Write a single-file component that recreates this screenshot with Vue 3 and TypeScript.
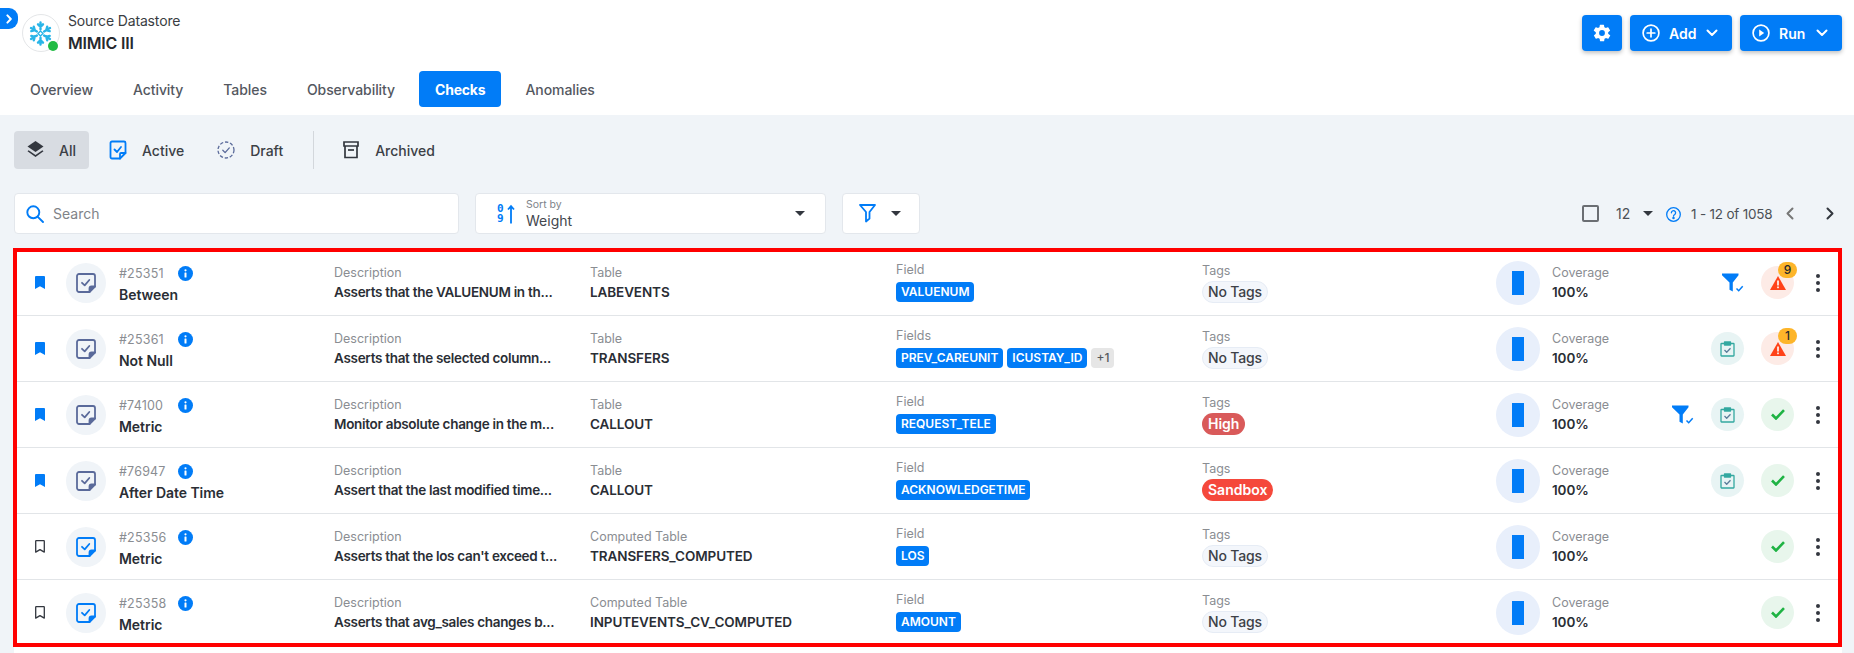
<script setup lang="ts">
interface Chip { label: string; gray?: boolean }
interface Row {
  id: string; name: string; desc: string; tableLabel: string; table: string;
  fieldLabel: string; chips: Chip[]; tag: string; tagKind: string;
  active: boolean; bookmarked: boolean; funnel: boolean; clip: boolean; warn: string;
}
const tabs = ['Overview', 'Activity', 'Tables', 'Observability', 'Checks', 'Anomalies']
const rows: Row[] = [
  { id: '#25351', name: 'Between', desc: 'Asserts that the VALUENUM in th...', tableLabel: 'Table', table: 'LABEVENTS', fieldLabel: 'Field', chips: [{ label: 'VALUENUM' }], tag: 'No Tags', tagKind: 'none', active: false, bookmarked: true, funnel: true, clip: false, warn: '9' },
  { id: '#25361', name: 'Not Null', desc: 'Asserts that the selected column...', tableLabel: 'Table', table: 'TRANSFERS', fieldLabel: 'Fields', chips: [{ label: 'PREV_CAREUNIT' }, { label: 'ICUSTAY_ID' }, { label: '+1', gray: true }], tag: 'No Tags', tagKind: 'none', active: false, bookmarked: true, funnel: false, clip: true, warn: '1' },
  { id: '#74100', name: 'Metric', desc: 'Monitor absolute change in the m...', tableLabel: 'Table', table: 'CALLOUT', fieldLabel: 'Field', chips: [{ label: 'REQUEST_TELE' }], tag: 'High', tagKind: 'high', active: false, bookmarked: true, funnel: true, clip: true, warn: '' },
  { id: '#76947', name: 'After Date Time', desc: 'Assert that the last modified time...', tableLabel: 'Table', table: 'CALLOUT', fieldLabel: 'Field', chips: [{ label: 'ACKNOWLEDGETIME' }], tag: 'Sandbox', tagKind: 'sandbox', active: false, bookmarked: true, funnel: false, clip: true, warn: '' },
  { id: '#25356', name: 'Metric', desc: "Asserts that the los can't exceed t...", tableLabel: 'Computed Table', table: 'TRANSFERS_COMPUTED', fieldLabel: 'Field', chips: [{ label: 'LOS' }], tag: 'No Tags', tagKind: 'none', active: true, bookmarked: false, funnel: false, clip: false, warn: '' },
  { id: '#25358', name: 'Metric', desc: 'Asserts that avg_sales changes b...', tableLabel: 'Computed Table', table: 'INPUTEVENTS_CV_COMPUTED', fieldLabel: 'Field', chips: [{ label: 'AMOUNT' }], tag: 'No Tags', tagKind: 'none', active: true, bookmarked: false, funnel: false, clip: false, warn: '' },
]
</script>

<template>
  <div class="page">
    <header class="top">
      <div class="toggle">
        <svg width="10" height="10" viewBox="0 0 10 10" fill="none" stroke="#fff" stroke-width="2" stroke-linecap="round" stroke-linejoin="round"><path d="M3.4 1.4 6.8 5 3.4 8.6" /></svg>
      </div>
      <div class="head">
        <div class="brand">
          <div class="logo">
            <svg width="25" height="25" viewBox="0 0 24 24" fill="none" stroke="#29b5e8" stroke-width="2.3" stroke-linecap="round">
              <g v-for="a in [0, 60, 120, 180, 240, 300]" :key="a" :transform="`rotate(${a} 12 12)`">
                <path d="M12 8V1.5M9.6 3.2 12 5.6l2.4-2.4" />
              </g>
              <path d="m12 9.6 2.4 2.4-2.4 2.4L9.6 12Z" stroke-width="1.2" />
            </svg>
            <span class="dot"></span>
          </div>
          <div class="brand-text">
            <div class="eyebrow">Source Datastore</div>
            <div class="title">MIMIC III</div>
          </div>
        </div>
        <div class="top-actions">
          <button class="btn icon-only">
            <svg width="20" height="20" viewBox="0 0 24 24" fill="#fff"><path d="M19.4 13a7.8 7.8 0 0 0 0-2l2.1-1.6a.5.5 0 0 0 .1-.7l-2-3.4a.5.5 0 0 0-.6-.2l-2.5 1a7.5 7.5 0 0 0-1.7-1l-.4-2.6a.5.5 0 0 0-.5-.5h-4a.5.5 0 0 0-.5.4l-.4 2.7a7.5 7.5 0 0 0-1.7 1l-2.5-1a.5.5 0 0 0-.6.2l-2 3.4a.5.5 0 0 0 .1.7L4.600 11a7.800 7.800 0 0 0 0 2l-2.100 1.600a.5.5 0 0 0-.1.7l2 3.400c.1.200.4.300.6.200l2.500-1c.5.4 1.100.7 1.700 1l.4 2.600c0 .3.200.5.500.5h4c.3 0 .5-.2.5-.4l.4-2.700a7.500 7.500 0 0 0 1.700-1l2.500 1c.2.100.5 0 .6-.2l2-3.400a.5.5 0 0 0-.1-.7ZM12 15.500a3.500 3.500 0 1 1 0-7 3.500 3.500 0 0 1 0 7Z" /></svg>
          </button>
          <button class="btn">
            <svg width="18" height="18" viewBox="0 0 18 18" fill="none" stroke="#fff" stroke-width="1.7" stroke-linecap="round"><circle cx="9" cy="9" r="7.900" /><path d="M9 5.200v7.600M5.200 9h7.600" /></svg>
            <span>Add</span>
            <svg class="chev" width="12" height="8" viewBox="0 0 12 8" fill="none" stroke="#fff" stroke-width="2" stroke-linecap="round" stroke-linejoin="round"><path d="m1.500 1.500 4.500 4.500 4.500-4.500" /></svg>
          </button>
          <button class="btn">
            <svg width="18" height="18" viewBox="0 0 18 18" fill="none" stroke="#fff" stroke-width="1.700"><circle cx="9" cy="9" r="7.900" /><path d="M7.200 5.500v7l5-3.500Z" fill="#fff" stroke="none" /></svg>
            <span>Run</span>
            <svg class="chev" width="12" height="8" viewBox="0 0 12 8" fill="none" stroke="#fff" stroke-width="2" stroke-linecap="round" stroke-linejoin="round"><path d="m1.500 1.500 4.500 4.500 4.500-4.500" /></svg>
          </button>
        </div>
      </div>
      <nav class="tabs">
        <a v-for="t in tabs" :key="t" class="tab" :class="{ on: t === 'Checks' }">{{ t }}</a>
      </nav>
    </header>

    <main class="body">
      <div class="status">
        <div class="st st-on">
          <svg width="17" height="18" viewBox="0 0 17 18" fill="#33373f"><path d="m8.500 0 8 5.500-8 5.500-8-5.500Z" /><path d="m1.600 9.300 6.900 4.700 6.900-4.700 1.100.9-8 5.800-8-5.800Z" /></svg>
          <span>All</span>
        </div>
        <div class="st">
          <svg width="18" height="20" viewBox="0 0 18 20" fill="none" stroke="#017cf7" stroke-width="1.800" stroke-linejoin="round" stroke-linecap="round"><path d="M3 1.500h12a1.500 1.500 0 0 1 1.500 1.500v10L11 18.500H3A1.500 1.500 0 0 1 1.500 17V3A1.500 1.500 0 0 1 3 1.500Z" /><path d="m5.500 9.500 2.500 2.500 4-5" /><path d="M11 18.500V14a1 1 0 0 1 1-1h4.500" /></svg>
          <span>Active</span>
        </div>
        <div class="st st-draft">
          <svg width="18" height="18" viewBox="0 0 18 18" fill="none" stroke="#5a6a9a" stroke-width="1.300"><circle cx="9" cy="9" r="8" stroke-dasharray="3.400 1.800" /><path d="m5.800 9.300 2.300 2.300 4.200-4.700" stroke-linecap="round" stroke-linejoin="round" /></svg>
          <span>Draft</span>
        </div>
        <i class="vline"></i>
        <div class="st st-arch">
          <svg width="16" height="18" viewBox="0 0 16 18" fill="none" stroke="#33373f" stroke-width="1.700"><path d="M1 1h14v4H1Z" /><path d="M2 5v11.500h12V5" /><path d="M5 9h6" /></svg>
          <span>Archived</span>
        </div>
      </div>

      <div class="filters">
        <div class="box search">
          <svg width="18" height="18" viewBox="0 0 18 18" fill="none" stroke="#017cf7" stroke-width="1.900" stroke-linecap="round"><circle cx="7.300" cy="7.300" r="6" /><path d="m11.800 11.800 5.200 5.200" /></svg>
          <span class="ph">Search</span>
        </div>
        <div class="box sort">
          <div class="digits"><span>0</span><span>9</span></div>
          <svg class="arrow" width="8" height="20" viewBox="0 0 8 20" fill="none" stroke="#017cf7" stroke-width="1.800"><path d="M4 19.500V2.500M1 5.500 4 2.200l3 3.300" /></svg>
          <div class="sort-text">
            <div class="sb">Sort by</div>
            <div class="sv">Weight</div>
          </div>
          <i class="caret sort-caret"></i>
        </div>
        <div class="box filter">
          <svg width="17" height="19" viewBox="0 0 17 19" fill="none" stroke="#017cf7" stroke-width="1.800" stroke-linejoin="round"><path d="M1 1h15l-5.500 7v6.500L7 17.500V8Z" /></svg>
          <i class="caret"></i>
        </div>
        <div class="pager">
          <i class="check"></i>
          <span class="per">12</span>
          <i class="caret"></i>
          <svg class="help" width="15" height="15" viewBox="0 0 15 15" fill="none" stroke="#017cf7" stroke-width="1.300"><circle cx="7.500" cy="7.500" r="6.800" /><path d="M5.400 5.800a2.100 2.100 0 1 1 3.300 1.700c-.8.500-1.200.9-1.200 1.700" stroke-linecap="round" /><circle cx="7.500" cy="11.100" r=".6" fill="#017cf7" /></svg>
          <span class="range">1 - 12 of 1058</span>
          <svg class="pl" width="8" height="13" viewBox="0 0 8 13" fill="none" stroke="#777" stroke-width="2" stroke-linecap="round" stroke-linejoin="round"><path d="M6.500 1.500 1.500 6.500l5 5" /></svg>
          <svg class="pr" width="8" height="13" viewBox="0 0 8 13" fill="none" stroke="#33373f" stroke-width="2" stroke-linecap="round" stroke-linejoin="round"><path d="m1.500 1.500 5 5-5 5" /></svg>
        </div>
      </div>

      <section class="sheet">
        <div class="list">
          <article v-for="r in rows" :key="r.id" class="row">
            <div class="c-main">
              <svg v-if="r.bookmarked" class="bm" width="10" height="13" viewBox="0 0 10 13" fill="#017cf7"><path d="M0 1a1 1 0 0 1 1-1h8a1 1 0 0 1 1 1v12L5 10.200 0 13Z" /></svg>
              <svg v-else class="bm" width="10" height="13" viewBox="0 0 10 13" fill="none" stroke="#33373f" stroke-width="1.300" stroke-linejoin="round"><path d="M.7 1.200a.5.5 0 0 1 .5-.5h7.600a.5.5 0 0 1 .5.5v10.900L5 9.600l-4.300 2.500Z" /></svg>
              <div class="ic" :class="{ act: r.active }">
                <svg width="20" height="20" viewBox="0 0 20 20" fill="none" stroke="currentColor" stroke-width="1.800" stroke-linecap="round" stroke-linejoin="round"><path d="M3 1h14a2 2 0 0 1 2 2v10.500L13.500 19H3a2 2 0 0 1-2-2V3a2 2 0 0 1 2-2Z" /><path d="m6 9.800 2.700 2.500 4.600-5.300" /><path d="M13.500 19v-3.500a2 2 0 0 1 2-2H19" fill="currentColor" /></svg>
              </div>
              <div class="idw">
                <div class="idl">
                  <span class="lab id">{{ r.id }}</span>
                  <svg class="inf" width="15" height="15" viewBox="0 0 15 15"><circle cx="7.500" cy="7.500" r="7.500" fill="#017cf7" /><rect x="6.500" y="6.500" width="2" height="5" rx=".5" fill="#fff" /><circle cx="7.500" cy="4.300" r="1.100" fill="#fff" /></svg>
                </div>
                <div class="nm">{{ r.name }}</div>
              </div>
            </div>
            <div class="cell">
              <div class="lab">Description</div>
              <div class="val desc">{{ r.desc }}</div>
            </div>
            <div class="cell">
              <div class="lab">{{ r.tableLabel }}</div>
              <div class="val">{{ r.table }}</div>
            </div>
            <div class="cell">
              <div class="lab lab-f">{{ r.fieldLabel }}</div>
              <div class="chips">
                <span v-for="c in r.chips" :key="c.label" class="chip" :class="{ gray: c.gray }">{{ c.label }}</span>
              </div>
            </div>
            <div class="cell">
              <div class="lab lab-t">Tags</div>
              <div class="tagw"><span class="tag" :class="r.tagKind">{{ r.tag }}</span></div>
            </div>
            <div class="c-end">
              <div class="gauge"><i></i></div>
              <div class="cov">
                <div class="lab">Coverage</div>
                <div class="val">100%</div>
              </div>
              <div class="acts">
                <svg v-if="r.funnel" class="fn" width="22" height="20" viewBox="0 0 22 20"><path d="M0 .5h16.500v1.800L10.800 9.400v9.100l-3.300-1.800V9.400L0 2.300Z" fill="#017cf7" /><path d="m14.500 15.500 2.200 2.200 4-4.400" fill="none" stroke="#017cf7" stroke-width="1.500" /></svg>
                <div v-if="r.clip" class="round teal">
                  <svg width="15" height="16" viewBox="0 0 15 16" fill="none" stroke="#33a8a0" stroke-width="1.300" stroke-linejoin="round"><path d="M4 2.500H1.500a.5.500 0 0 0-.5.500v11.500a.5.500 0 0 0 .5.500h12a.5.500 0 0 0 .5-.5V3a.5.500 0 0 0-.5-.5H11" /><path d="M4.500 1h6v3h-6Z" fill="#33a8a0" /><path d="m4.500 9 2.200 2.200 3.800-4" stroke="#5a7d9a" /></svg>
                </div>
                <div v-if="r.warn" class="round red">
                  <svg width="16" height="14" viewBox="0 0 16 14"><path d="M8 0 16 14H0Z" fill="#ff4218" /><rect x="7.200" y="4.500" width="1.600" height="5" fill="#fff" /><rect x="7.200" y="10.500" width="1.600" height="1.700" fill="#fff" /></svg>
                  <b class="badge">{{ r.warn }}</b>
                </div>
                <div v-else class="round green">
                  <svg width="14" height="11" viewBox="0 0 14 11" fill="none" stroke="#1fb344" stroke-width="2.600"><path d="m1 5.500 4 4 8-8.300" /></svg>
                </div>
                <div class="kebab"><i></i><i></i><i></i></div>
              </div>
            </div>
          </article>
        </div>
      </section>
    </main>
  </div>
</template>

<style>
html, body { margin: 0; background: #fff; }
</style>

<style scoped>
.page { width: 1854px; height: 653px; overflow: hidden; font-family: Inter, "Noto Sans", sans-serif; color: #2f333b; background: #fff; }
.top { position: relative; height: 115px; background: #fff; box-sizing: border-box; }
.toggle { position: absolute; left: 0; top: 8px; width: 18px; height: 21px; background: #017cf7; border-radius: 0 9px 9px 0; display: flex; align-items: center; justify-content: center; }
.head { height: 71px; display: flex; justify-content: space-between; padding: 14px 12px 0 22px; box-sizing: border-box; }
.brand { display: flex; gap: 8px; }
.logo { position: relative; width: 38px; height: 38px; border: 1px solid #e4e6e8; border-radius: 50%; box-sizing: border-box; display: flex; align-items: center; justify-content: center; padding-right: 2px; }
.dot { position: absolute; right: 1px; bottom: 0; width: 10px; height: 10px; border-radius: 50%; background: #22bb44; }
.eyebrow { font-size: 14px; line-height: 16px; margin-top: -1px; color: #3a3d42; letter-spacing: -.15px; }
.title { font-size: 16px; line-height: 20px; margin-top: 4px; font-weight: 600; color: #26292e; letter-spacing: -.2px; }
.top-actions { display: flex; gap: 8px; padding-top: 1px; }
.btn { height: 36px; width: 102px; padding: 0 0 0 12px; border: 0; border-radius: 4px; background: #017cf7; color: #fff; font: 600 14px Inter, sans-serif; display: flex; align-items: center; gap: 9px; box-shadow: 0 2px 4px rgba(0, 0, 0, .25); box-sizing: border-box; }
.btn .chev { margin-left: -2px; }
.btn span { width: 30px; text-align: left; }
.icon-only { width: 40px; padding: 0; justify-content: center; }
.tabs { display: flex; gap: 8px; padding-left: 14px; }
.tab { height: 36px; padding: 0 16px; display: flex; align-items: center; border-radius: 4px; font-size: 14px; font-weight: 500; color: #54585f; letter-spacing: -.07px; }
.tab.on { background: #017cf7; color: #fff; font-weight: 700; letter-spacing: -.2px; }

.body { background: #f0f4f8; height: 538px; padding: 16px 12px 0 14px; box-sizing: border-box; }
.status { display: flex; align-items: center; height: 38px; font-size: 14px; font-weight: 500; color: #3c4046; }
.st { display: flex; align-items: center; height: 38px; gap: 15px; margin-left: 20px; }
.st-on { width: 75px; margin-left: 0; padding-left: 13px; gap: 15px; background: #d8dce2; border-radius: 4px; box-sizing: border-box; }
.st-draft { margin-left: 33px; }
.vline { width: 1px; height: 38px; background: #d3d7dc; margin-left: 30px; }
.st-arch { margin-left: 29px; gap: 16px; }
.filters { display: flex; align-items: center; height: 41px; margin-top: 24px; }
.box { height: 41px; background: #fff; border: 1px solid #e3e7ec; border-radius: 4px; box-sizing: border-box; display: flex; align-items: center; }
.search { width: 445px; padding-left: 11px; gap: 9px; }
.ph { font-size: 14px; color: #7f8388; }
.sort { width: 351px; margin-left: 16px; padding-left: 21px; }
.digits { display: flex; flex-direction: column; width: 8px; font: 700 11px/10px "DejaVu Sans Mono", monospace; color: #017cf7; }
.arrow { margin-left: 2px; }
.sort-text { margin-left: 11px; }
.sb { font-size: 10.500px; line-height: 12px; color: #80848a; }
.sv { font-size: 14px; line-height: 17px; margin-top: 1px; color: #43474d; }
.caret { display: block; width: 0; height: 0; border: 5px solid transparent; border-top: 5px solid #33373f; border-bottom: 0; }
.sort-caret { margin-left: auto; margin-right: 20px; }
.filter { width: 78px; margin-left: 16px; padding-left: 16px; gap: 15px; }
.pager { margin-left: auto; display: flex; align-items: center; color: #4c5056; font-size: 14px; padding-right: 8px; }
.check { width: 17px; height: 17px; border: 2px solid #6b6e73; border-radius: 2px; box-sizing: border-box; }
.per { margin-left: 17px; width: 27px; }
.help { margin-left: 13px; margin-top: 2px; }
.range { margin-left: 10px; width: 95px; white-space: nowrap; font-size: 13.500px; letter-spacing: -.2px; }
.pr { margin-left: 32px; }

.sheet { margin-top: 16px; width: 1828px; height: 403px; background: #fff; }
.list { margin-left: 1px; width: 1825px; height: 395px; outline: 4px solid #ff0000; outline-offset: -2px; overflow: hidden; }
.row { height: 66px; box-sizing: border-box; border-bottom: 1px solid #e2e5e8; display: grid; grid-template-columns: 319px 256px 306px 306px 294px 1fr; align-items: start; }
.c-main { display: flex; align-items: center; padding-left: 20px; height: 65px; }
.bm { flex: none; }
.ic { width: 40px; height: 40px; margin-left: 21px; border-radius: 50%; background: #f0f4f8; color: #5a6a9a; display: flex; align-items: center; justify-content: center; flex: none; }
.ic.act { color: #017cf7; }
.idw { margin-left: 13px; }
.idl { display: flex; align-items: center; height: 20px; padding-top: 2px; }
.id { width: 59px; color: #80848a; letter-spacing: .2px; }
.inf { display: block; }
.nm { font-size: 14px; font-weight: 600; line-height: 18px; margin-top: 2px; color: #2a2e35; letter-spacing: -.05px; }
.cell { min-width: 0; padding: 15px 20px 0 0; }
.lab { font-size: 12.500px; line-height: 16px; color: #8a8d92; }
.val { font-size: 13.500px; line-height: 18px; margin-top: 2px; font-weight: 600; color: #2a2e35; white-space: nowrap; letter-spacing: -.1px; }
.desc { letter-spacing: -.3px; }
.chips { display: flex; gap: 4px; margin-top: 4px; }
.chip { height: 20px; padding: 0 5px; border-radius: 4px; background: #017cf7; color: #fff; font-size: 12px; font-weight: 600; line-height: 20px; }
.chip.gray { background: #e6e6e6; color: #55585d; font-weight: 500; }
.lab-f { margin-top: -3px; }
.lab-t { margin-top: -2px; }
.tagw { margin-top: 2px; }
.tag { display: inline-block; height: 22px; padding: 0 6px; border-radius: 11px; font-size: 14px; line-height: 22px; font-weight: 500; box-sizing: border-box; }
.tag.none { background: #f3f6fb; border: 1px solid #e6ecf5; line-height: 20px; padding: 0 5px; color: #3d4147; letter-spacing: -.15px; }
.tag.high { background: #d95a5a; color: #fff; font-weight: 600; }
.tag.sandbox { background: #f5483b; color: #fff; font-weight: 600; }
.c-end { display: flex; align-items: center; height: 65px; }
.gauge { width: 44px; height: 44px; border-radius: 50%; background: #e8effb; display: flex; align-items: center; justify-content: center; }
.gauge i { width: 12px; height: 24px; background: #017cf7; }
.cov { margin-left: 12px; }
.acts { margin-left: auto; display: flex; align-items: center; justify-content: flex-end; gap: 17px; padding-right: 18px; }
.round { position: relative; width: 33px; height: 33px; border-radius: 50%; display: flex; align-items: center; justify-content: center; }
.teal { background: #e8f4f4; }
.red { background: #fdebe6; }
.green { background: #e8f6ec; }
.badge { position: absolute; top: -4px; right: -3px; min-width: 17px; height: 16px; padding: 0 1px; border-radius: 8px; background: #fdb52a; color: #26292e; font-size: 12px; font-weight: 500; line-height: 16px; text-align: center; }
.kebab { width: 8px; margin-left: 3px; display: flex; flex-direction: column; align-items: center; gap: 3px; }
.kebab i { width: 4px; height: 4px; border-radius: 50%; background: #33373f; }
</style>
